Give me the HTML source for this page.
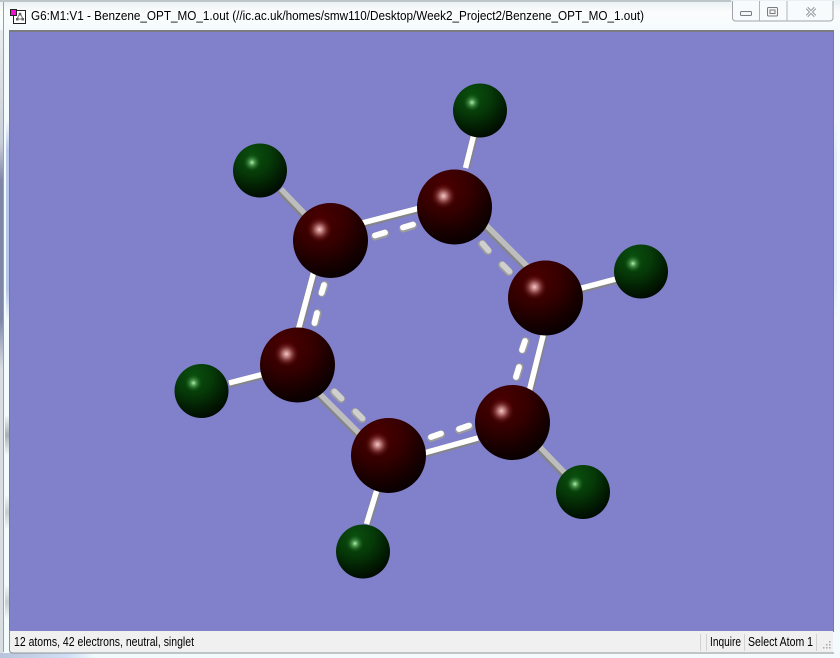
<!DOCTYPE html>
<html><head><meta charset="utf-8"><style>
html,body{margin:0;padding:0;background:#fff;overflow:hidden}
svg{display:block}
text{font-family:"Liberation Sans",sans-serif;font-size:12.5px;fill:#000}
</style></head><body>
<svg width="840" height="658" viewBox="0 0 840 658" xmlns="http://www.w3.org/2000/svg">
<defs>
<linearGradient id="tb" x1="0" y1="0" x2="0" y2="1"><stop offset="0" stop-color="#e8f0f2"/><stop offset=".4" stop-color="#fbfdfd"/><stop offset="1" stop-color="#f4fbfb"/></linearGradient>
<linearGradient id="lft" x1="0" y1="0" x2="0" y2="1"><stop offset="0" stop-color="#e8ecee"/><stop offset=".18" stop-color="#c8ced8"/><stop offset=".24" stop-color="#7f87a8"/><stop offset=".46" stop-color="#7f87a8"/><stop offset=".54" stop-color="#d8dde2"/><stop offset="1" stop-color="#d8dde2"/></linearGradient>
<linearGradient id="bot" x1="0" y1="0" x2="1" y2="0"><stop offset="0" stop-color="#b9c4dc"/><stop offset=".28" stop-color="#cfe0f6"/><stop offset=".4" stop-color="#f2fbfc"/><stop offset="1" stop-color="#f2fbfc"/></linearGradient>
<linearGradient id="soft" x1="0" y1="0" x2="0" y2="1"><stop offset="0" stop-color="#8fa4e0" stop-opacity="0"/><stop offset=".15" stop-color="#8fa4e0" stop-opacity=".6"/><stop offset=".85" stop-color="#8fa4e0" stop-opacity=".6"/><stop offset="1" stop-color="#8fa4e0" stop-opacity="0"/></linearGradient>
<linearGradient id="softg" x1="0" y1="0" x2="0" y2="1"><stop offset="0" stop-color="#8a9098" stop-opacity="0"/><stop offset=".5" stop-color="#8a9098" stop-opacity=".7"/><stop offset="1" stop-color="#8a9098" stop-opacity="0"/></linearGradient>
<linearGradient id="softr" x1="0" y1="0" x2="0" y2="1"><stop offset="0" stop-color="#dce8fa" stop-opacity="0"/><stop offset=".2" stop-color="#dce8fa" stop-opacity=".8"/><stop offset=".8" stop-color="#dce8fa" stop-opacity=".8"/><stop offset="1" stop-color="#dce8fa" stop-opacity="0"/></linearGradient>
<radialGradient id="c" cx=".36" cy=".22" r=".85"><stop offset="0" stop-color="#4a0000"/><stop offset=".4" stop-color="#360000"/><stop offset=".75" stop-color="#160000"/><stop offset="1" stop-color="#040000"/></radialGradient>
<radialGradient id="ch"><stop offset="0" stop-color="#f8c8c8"/><stop offset=".3" stop-color="#c48282" stop-opacity=".85"/><stop offset=".65" stop-color="#8a3a3a" stop-opacity=".4"/><stop offset="1" stop-color="#500000" stop-opacity="0"/></radialGradient>
<radialGradient id="h" cx=".36" cy=".22" r=".85"><stop offset="0" stop-color="#0a4f0e"/><stop offset=".4" stop-color="#063a08"/><stop offset=".75" stop-color="#021a02"/><stop offset="1" stop-color="#000600"/></radialGradient>
<radialGradient id="hh"><stop offset="0" stop-color="#b8ecb8"/><stop offset=".3" stop-color="#5aa85a" stop-opacity=".85"/><stop offset="1" stop-color="#0a5010" stop-opacity="0"/></radialGradient>
</defs>

<!-- window chrome -->
<rect width="840" height="658" fill="#f4fbfc"/>
<rect width="840" height="31" fill="url(#tb)"/>
<rect x="0" y="0" width="731" height="2" fill="#9aa0a6" opacity=".55"/>
<rect x="0" y="30" width="3" height="628" fill="url(#lft)"/>
<rect x="3" y="2" width="1" height="650" fill="#9b9fa4"/>
<rect x="6" y="120" width="3" height="200" fill="url(#soft)"/>
<rect x="5" y="415" width="4" height="40" fill="url(#softg)"/>
<rect x="5" y="495" width="4" height="34" fill="url(#softg)" opacity=".6"/>
<rect x="5" y="585" width="4" height="34" fill="url(#softg)" opacity=".6"/>
<rect x="0" y="653" width="240" height="5" fill="url(#bot)"/>
<rect x="834" y="120" width="3" height="200" fill="url(#softr)"/>

<!-- title bar icon -->
<rect x="13.500" y="10.500" width="12" height="13" fill="#fff" stroke="#222"/>
<path d="M20 13l-3 6h6zM20 13v1" fill="none" stroke="#777" stroke-width="1"/>
<rect x="16" y="18" width="2.500" height="2.500" fill="#666"/><rect x="21.500" y="18" width="2.500" height="2.500" fill="#666"/><rect x="18.800" y="13" width="2.500" height="2.500" fill="#666"/>
<rect x="10.500" y="9.500" width="6" height="6" fill="#f010d0" stroke="#222"/>
<text x="31" y="20" textLength="613" lengthAdjust="spacingAndGlyphs">G6:M1:V1 - Benzene_OPT_MO_1.out (//ic.ac.uk/homes/smw110/Desktop/Week2_Project2/Benzene_OPT_MO_1.out)</text>

<!-- window buttons -->
<path d="M732.500 1V18a3 3 0 0 0 3 3H830a3 3 0 0 0 3-3V1" fill="#f8fbfb" stroke="#a0a4a8"/>
<path d="M759.500 1V21M787 1V21" stroke="#b0b4b8"/>
<rect x="740.500" y="11.500" width="11" height="4" rx="1" fill="#f4f6f6" stroke="#777c82"/>
<rect x="767.500" y="7.500" width="10" height="8.500" rx="1" fill="#f4f6f6" stroke="#777c82"/>
<rect x="770" y="10" width="5" height="3.500" fill="#f4f6f6" stroke="#777c82"/>
<path d="M807 8l8 8M815 8l-8 8" stroke="#777c82" stroke-width="3"/>
<path d="M807 8l8 8M815 8l-8 8" stroke="#f4f6f6" stroke-width="1.300"/>

<!-- viewport -->
<rect x="9" y="30" width="825" height="602" fill="#7c7c80"/>
<rect x="10" y="32" width="823" height="599" fill="#8080cb"/>

<!-- bonds: shadow -->
<g stroke-linecap="round" fill="none">
<g stroke="#858585" stroke-width="7.500" stroke-linecap="butt">
<line x1="280" y1="190" x2="306" y2="217"/>
<line x1="466" y1="168" x2="474" y2="136"/>
<line x1="578" y1="290" x2="616" y2="280"/>
<line x1="538" y1="447" x2="565" y2="475"/>
<line x1="367" y1="524" x2="378" y2="488"/>
<line x1="229" y1="384" x2="264" y2="375"/>
<line x1="362" y1="224" x2="420" y2="209"/>
<line x1="485" y1="226" x2="527" y2="268"/>
<line x1="544" y1="334" x2="530" y2="390"/>
<line x1="478" y1="439" x2="424" y2="454"/>
<line x1="318" y1="394" x2="359" y2="435"/>
<line x1="299" y1="329" x2="314" y2="273"/>
</g>
<!-- gray-ish highlights -->
<g stroke="#bdbdbd" stroke-width="5.500" stroke-linecap="butt">
<line x1="281" y1="189" x2="307" y2="216"/>
<line x1="539" y1="446" x2="566" y2="474"/>
<line x1="486" y1="225" x2="528" y2="267"/>
<line x1="319" y1="393" x2="360" y2="434"/>
</g>
<!-- white highlights -->
<g stroke="#fff" stroke-width="5.500" stroke-linecap="butt">
<line x1="465.500" y1="168" x2="473.500" y2="136"/>
<line x1="578" y1="289" x2="616" y2="279"/>
<line x1="366.500" y1="524" x2="377.500" y2="488"/>
<line x1="229" y1="383" x2="264" y2="374"/>
<line x1="362" y1="223" x2="420" y2="208"/>
<line x1="543.500" y1="334" x2="529.500" y2="390"/>
<line x1="478" y1="438" x2="424" y2="453"/>
<line x1="298.500" y1="329" x2="313.500" y2="273"/>
</g>
<!-- dashes -->
<g stroke="#9c9c9c" stroke-width="8">
<line x1="375" y1="236.500" x2="385" y2="233.500"/>
<line x1="403" y1="228.500" x2="413" y2="225.500"/>
<line x1="441" y1="434.500" x2="431" y2="438"/>
<line x1="469" y1="426.500" x2="459" y2="430"/>
<line x1="525.500" y1="341" x2="522.500" y2="350"/>
<line x1="519.500" y1="367" x2="516.500" y2="377"/>
<line x1="324.500" y1="285" x2="322" y2="293"/>
<line x1="317.500" y1="313" x2="315" y2="323"/>
<line x1="482" y1="244" x2="488" y2="251"/>
<line x1="502" y1="265" x2="509" y2="272"/>
<line x1="334" y1="392" x2="341" y2="399"/>
<line x1="355" y1="412" x2="362" y2="419"/>
</g>
<g stroke="#fff" stroke-width="5.800">
<line x1="375" y1="235.500" x2="385" y2="232.500"/>
<line x1="403" y1="227.500" x2="413" y2="224.500"/>
<line x1="441" y1="433.500" x2="431" y2="437"/>
<line x1="469" y1="425.500" x2="459" y2="429"/>
<line x1="525" y1="341" x2="522" y2="350"/>
<line x1="519" y1="367" x2="516" y2="377"/>
<line x1="324" y1="285" x2="321.500" y2="293"/>
<line x1="317" y1="313" x2="314.500" y2="323"/>
</g>
<g stroke="#cfcfcf" stroke-width="5.800">
<line x1="482.500" y1="243.500" x2="488.500" y2="250.500"/>
<line x1="502.500" y1="264.500" x2="509.500" y2="271.500"/>
<line x1="334.500" y1="391.500" x2="341.500" y2="398.500"/>
<line x1="355.500" y1="411.500" x2="362.500" y2="418.500"/>
</g>
</g>

<!-- hydrogens -->
<g fill="url(#h)">
<circle cx="260" cy="170.500" r="27"/>
<circle cx="480" cy="110.500" r="27"/>
<circle cx="641" cy="271.500" r="27"/>
<circle cx="583" cy="492" r="27"/>
<circle cx="363" cy="551.500" r="27"/>
<circle cx="201.500" cy="391" r="27"/>
</g>
<g fill="url(#hh)">
<circle cx="252" cy="162.500" r="9"/>
<circle cx="472" cy="102.500" r="9"/>
<circle cx="633" cy="263.500" r="9"/>
<circle cx="575" cy="484" r="9"/>
<circle cx="355" cy="543.500" r="9"/>
<circle cx="193.500" cy="383" r="9"/>
</g>

<!-- carbons -->
<g fill="url(#c)">
<circle cx="330.500" cy="240.500" r="37.500"/>
<circle cx="454.500" cy="207" r="37.500"/>
<circle cx="545.500" cy="298" r="37.500"/>
<circle cx="512.500" cy="422.500" r="37.500"/>
<circle cx="388.500" cy="455.500" r="37.500"/>
<circle cx="297.500" cy="365" r="37.500"/>
</g>
<g fill="url(#ch)">
<circle cx="319.500" cy="229.500" r="13"/>
<circle cx="443.500" cy="196" r="13"/>
<circle cx="534.500" cy="287" r="13"/>
<circle cx="501.500" cy="411" r="13"/>
<circle cx="377.500" cy="444.500" r="13"/>
<circle cx="286.500" cy="354" r="13"/>
</g>

<!-- status bar -->
<rect x="10" y="631" width="823" height="21" fill="#f0f0f0"/>
<path d="M9.500 630V650a3 3 0 0 0 3 3H834" fill="none" stroke="#8a8e92"/>
<text x="14" y="646" textLength="180" lengthAdjust="spacingAndGlyphs">12 atoms, 42 electrons, neutral, singlet</text>
<path d="M700.500 634V651M706.500 634V651M744.500 634V651M816.500 634V651" stroke="#d2d2d2"/>
<text x="710" y="646" textLength="31" lengthAdjust="spacingAndGlyphs">Inquire</text>
<text x="748" y="646" textLength="65" lengthAdjust="spacingAndGlyphs">Select Atom 1</text>
<g fill="#a8a8a8">
<rect x="829" y="641" width="1.500" height="1.500"/>
<rect x="826" y="644" width="1.500" height="1.500"/><rect x="829" y="644" width="1.500" height="1.500"/>
<rect x="823" y="647" width="1.500" height="1.500"/><rect x="826" y="647" width="1.500" height="1.500"/><rect x="829" y="647" width="1.500" height="1.500"/>
</g>
</svg>
</body></html>
